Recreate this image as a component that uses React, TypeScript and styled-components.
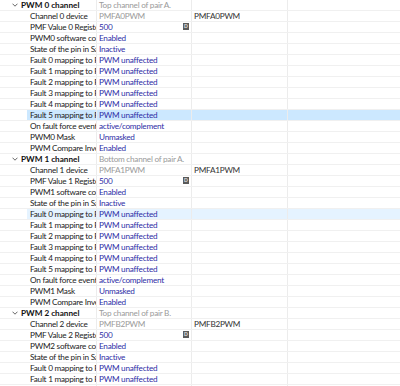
import React from "react";
import styled, { createGlobalStyle, css } from "styled-components";

type Row = {
	label: string;
	value: string;
	kind?: "value" | "muted";
	extra?: string;
	badge?: boolean;
};

type Section = {
	index: number;
	description: string;
	device: string;
};

const sections: Section[] = [
	{ index: 0, description: "Top channel of pair A.", device: "PMFA0PWM" },
	{ index: 1, description: "Bottom channel of pair A.", device: "PMFA1PWM" },
	{ index: 2, description: "Top channel of pair B.", device: "PMFB2PWM" },
];

// which row is selected / hovered, by section and row number
const selected = { section: 0, row: 9 };
const hovered = { section: 1, row: 4 };

const buildRows = (s: Section): Row[] => {
	const rows: Row[] = [
		{ label: `Channel ${s.index} device`, value: s.device, kind: "muted", extra: s.device },
		{ label: `PMF Value ${s.index} Register`, value: "500", badge: true },
		{ label: `PWM${s.index} software control`, value: "Enabled" },
		{ label: "State of the pin in Safe state", value: "Inactive" },
	];
	for (let f = 0; f < 6; f++) {
		rows.push({ label: `Fault ${f} mapping to PWM`, value: "PWM unaffected" });
	}
	rows.push({ label: "On fault force event", value: "active/complement" });
	rows.push({ label: `PWM${s.index} Mask`, value: "Unmasked" });
	rows.push({ label: "PWM Compare Invert", value: "Enabled" });
	return rows;
};

const App: React.FC = () => {
	return (
		<>
			<GlobalStyle />
			<Tree>
				{sections.map((s) => (
					<React.Fragment key={s.index}>
						<HeaderRow>
							<NameCell>
								<Chevron viewBox="0 0 6 4">
									<path d="M0.5 0.7 L3 3.2 L5.5 0.7" fill="none" stroke="#555" strokeWidth="0.9" />
								</Chevron>
								<HeaderTitle>PWM {s.index} channel</HeaderTitle>
							</NameCell>
							<ValueCell>
								<Muted>{s.description}</Muted>
							</ValueCell>
							<ExtraCell />
							<FillCell />
						</HeaderRow>
						{buildRows(s).map((r, i) => {
							const state =
								selected.section === s.index && selected.row === i
									? "selected"
									: hovered.section === s.index && hovered.row === i
									? "hover"
									: "none";
							return (
								<ChildRow key={i} $state={state}>
									<NameCell $child>{r.label}</NameCell>
									<ValueCell>
										{r.kind === "muted" ? <Muted>{r.value}</Muted> : <Value>{r.value}</Value>}
										{r.badge && <Badge>D</Badge>}
									</ValueCell>
									<ExtraCell>{r.extra}</ExtraCell>
									<FillCell />
								</ChildRow>
							);
						})}
					</React.Fragment>
				))}
			</Tree>
		</>
	);
};

export default App;

const GlobalStyle = createGlobalStyle`
	html, body {
		margin: 0;
		padding: 0;
		background: #fff;
		overflow: hidden;
	}
	body {
		font-family: Lato, "Noto Sans", sans-serif;
		font-size: 8.2px;
		letter-spacing: -0.25px;
		color: #222;
	}
`;

const Tree = styled.div`
	display: flex;
	flex-direction: column;
	width: 400px;
	height: 386px;
	overflow: hidden;
`;

const rowBase = css`
	display: grid;
	grid-template-columns: 97px 95px 96px 1fr;
	height: 11px;
	box-sizing: border-box;
	line-height: 10px;
	white-space: nowrap;
	flex-shrink: 0;
`;

const HeaderRow = styled.div`
	${rowBase};
	border-bottom: 1px solid #f0f0f0;
`;

const ChildRow = styled.div<{ $state: "selected" | "hover" | "none" }>`
	${rowBase};
	border-bottom: 1px solid #f0f0f0;
	background: ${(p) =>
		p.$state === "selected"
			? "linear-gradient(to right, transparent 27px, #cce8ff 27px)"
			: p.$state === "hover"
			? "linear-gradient(to right, transparent 27px, #e5f3ff 27px)"
			: "transparent"};
`;

const cellBase = css`
	overflow: hidden;
	border-right: 1px solid #ececec;
	display: flex;
	align-items: center;
	min-width: 0;
`;

const NameCell = styled.div<{ $child?: boolean }>`
	${cellBase};
	padding-left: ${(p) => (p.$child ? "30px" : "12px")};
	color: #222;
`;

const ValueCell = styled.div`
	${cellBase};
	padding-left: 2px;
	padding-right: 2px;
	justify-content: space-between;
`;

const ExtraCell = styled.div`
	${cellBase};
	padding-left: 2px;
	color: #333;
`;

const FillCell = styled.div``;

const Chevron = styled.svg`
	width: 6px;
	height: 4px;
	margin-right: 3px;
	flex-shrink: 0;
`;

const HeaderTitle = styled.span`
	font-weight: 700;
	letter-spacing: 0;
	color: #111;
`;

const Value = styled.span`
	color: #2e2ea6;
`;

const Muted = styled.span`
	color: #9a9a9a;
`;

const Badge = styled.span`
	width: 6px;
	height: 7px;
	background: #5a5a5a;
	color: #e8e8e8;
	font-size: 5px;
	font-weight: 700;
	letter-spacing: 0;
	line-height: 7px;
	text-align: center;
	flex-shrink: 0;
	margin-top: -1px;
`;
